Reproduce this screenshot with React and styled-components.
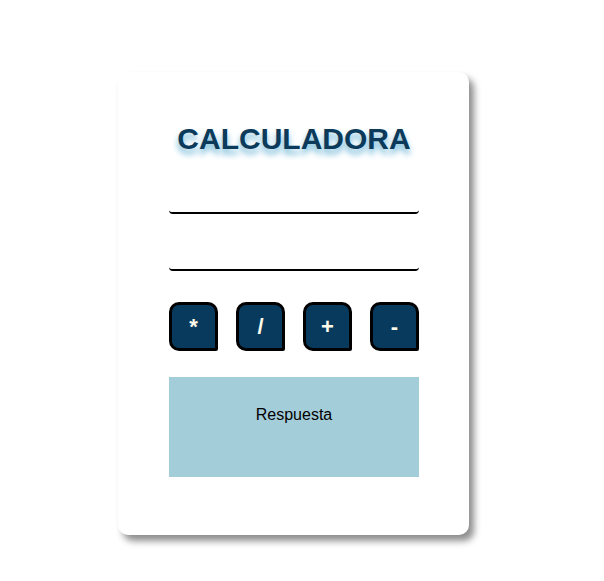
import React from 'react';
import styled, { createGlobalStyle } from 'styled-components';

const GlobalStyle = createGlobalStyle`
  body {
    margin: 0;
    background: #ffffff;
    font-family: "Liberation Sans", Arial, sans-serif;
  }
`;

const Page = styled.div`
  padding: 72px 0 40px 118px;
`;

const Card = styled.div`
  box-sizing: border-box;
  width: 351px;
  height: 463px;
  padding: 50px 50px 0 51px;
  background: #ffffff;
  border-radius: 10px;
  box-shadow: 5px 6px 7px rgba(0, 0, 0, 0.45);
  display: flex;
  flex-direction: column;
`;

const Title = styled.h1`
  margin: 0 0 28px;
  font-size: 30px;
  font-weight: bold;
  text-align: center;
  color: #0b3a5b;
  text-shadow: 0 5px 6px #6fb6d6;
`;

const Field = styled.input`
  box-sizing: border-box;
  width: 250px;
  height: 30px;
  margin-bottom: 27px;
  border: none;
  border-bottom: 2px solid #000;
  border-radius: 4px;
  outline: none;
  background: transparent;
  font-family: inherit;
  font-size: 16px;
`;

const Operators = styled.div`
  display: flex;
  justify-content: space-between;
  margin-top: 4px;
`;

const OpButton = styled.button`
  box-sizing: border-box;
  width: 49px;
  height: 49px;
  padding: 0;
  border: 3px solid #000;
  border-radius: 10px 10px 2px 10px;
  background: #083a5e;
  color: #fffbea;
  font-family: inherit;
  font-size: 22px;
  font-weight: 600;
  cursor: pointer;
`;

const Answer = styled.div`
  box-sizing: border-box;
  margin-top: 26px;
  height: 100px;
  padding-top: 29px;
  background: #a4cdda;
  text-align: center;
  font-size: 16px;
  color: #000;
`;

const ops = ['*', '/', '+', '-'];

export default function App() {
  return (
    <>
      <GlobalStyle />
      <Page>
        <Card>
          <Title>CALCULADORA</Title>
          <Field type="text" />
          <Field type="text" />
          <Operators>
            {ops.map((op) => (
              <OpButton key={op}>{op}</OpButton>
            ))}
          </Operators>
          <Answer>Respuesta</Answer>
        </Card>
      </Page>
    </>
  );
}
